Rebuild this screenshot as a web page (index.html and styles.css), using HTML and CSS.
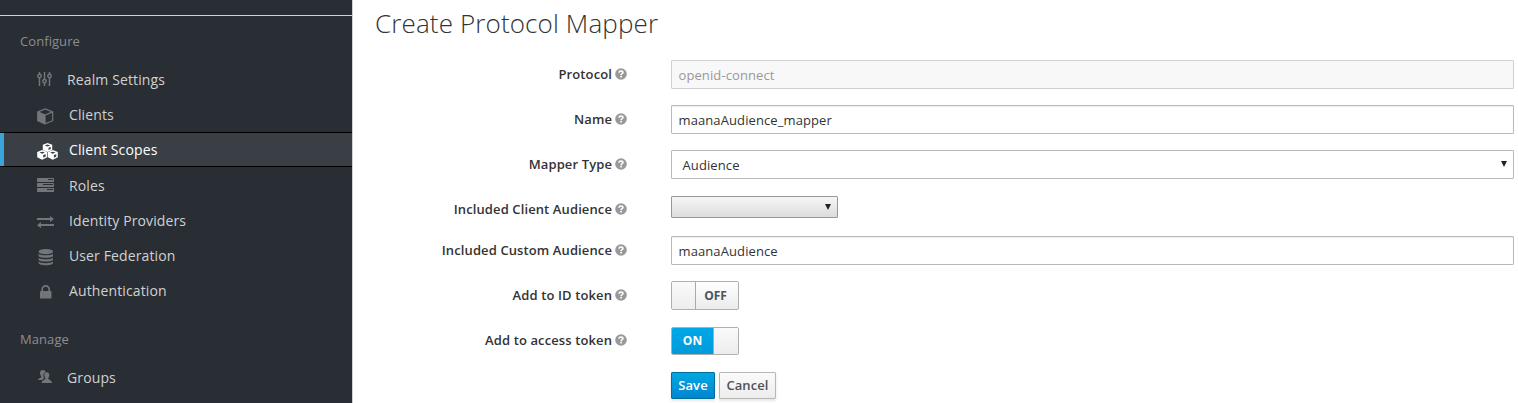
FILE: index.html
```html
<!DOCTYPE html>
<html lang="en">
<head>
<meta charset="utf-8">
<title>Create Protocol Mapper</title>
<link rel="stylesheet" href="styles.css">
</head>
<body>
<svg class="defs" width="0" height="0">
  <symbol id="help" viewBox="0 0 12 12">
    <circle cx="6" cy="6" r="5.8" fill="#999"/>
    <path d="M4 4.7C4.100 3.400 5 3 6 3c1.200 0 1.900.6 1.900 1.500C7.900 5.700 6.100 5.700 6.100 7" fill="none" stroke="#fff" stroke-width="1.600"/>
    <rect x="5.200" y="7.800" width="1.800" height="1.600" fill="#fff"/>
  </symbol>
</svg>
<div class="page">
  <nav class="sidebar">
    <div class="realm"></div>
    <h2 class="group-title">Configure</h2>
    <ul class="menu">
      <li class="item narrow"><svg class="icon" viewBox="0 0 21 17"><g fill="none" stroke="currentColor" stroke-width="1.5"><path d="M2.500 1v2M2.500 7v8M7.500 1v7.500M7.500 12v3M12.500 1v2M12.500 7v8"/><circle cx="2.500" cy="5" r="1.700"/><circle cx="7.500" cy="10.300" r="1.700"/><circle cx="12.500" cy="5" r="1.700"/></g></svg><span>Realm Settings</span></li>
      <li class="item"><svg class="icon" viewBox="0 0 21 17"><path d="M.5 4 8 7v9.200L.5 13z" fill="currentColor"/><path d="M.8 3.900 8.200 1l7.500 2.900v8.800L8 15.900.8 12.700zL8 7l7.700-3.100M8 7v9" fill="none" stroke="currentColor" stroke-width="1.200"/></svg><span>Clients</span></li>
      <li class="item active"><svg class="icon" viewBox="0 0 21 17"><g fill="currentColor"><path d="M10.500 0 15.200 1.800V7l-4.700 2L5.800 7V1.800z"/><path d="M5.200 7 10.200 9v5.200l-5 2.600-5-2.600V9z"/><path d="M15.800 7l5 2v5.200l-5 2.600-5-2.600V9z"/></g><g fill="#393f45"><path d="m7.800 2.400 2.700-.9 2.700.9-2.700 1zM11.500 4.800l2.300-.9v2.200l-2.300 1zM2.500 9.600 5.200 8.700l2.700.9-2.700 1.100zM6.300 12.100l2.400-.9v2.300l-2.400 1.300zM13.100 9.600l2.700-.9 2.700.9-2.700 1.100zM16.900 12.100l2.400-.9v2.300l-2.400 1.300z"/></g></svg><span>Client Scopes</span></li>
      <li class="item roles"><svg class="icon" viewBox="0 0 21 17"><g fill="currentColor"><rect y="1" width="17" height="4" rx=".6"/><rect y="6" width="17" height="4" rx=".6"/><rect y="11" width="17" height="4" rx=".6"/></g><path d="M11 2.500h5M6 7.500h10M10 12.500h6" stroke="#292e34" stroke-width="1"/></svg><span>Roles</span></li>
      <li class="item"><svg class="icon" viewBox="0 0 21 17"><path d="M0 4h13V2l4 3-4 3V6H0zM17 10H4V8l-4 3.200 4 3V12h13z" fill="currentColor"/></svg><span>Identity Providers</span></li>
      <li class="item"><svg class="icon" viewBox="0 0 21 17"><g fill="currentColor"><ellipse cx="8.800" cy="2.700" rx="7.200" ry="2.600"/><path d="M1.600 4.700c2 2.200 12.400 2.200 14.400 0v2c0 2.800-14.400 2.800-14.400 0zM1.600 8.700c2 2.200 12.400 2.200 14.400 0v1.800c0 2.800-14.400 2.800-14.400 0zM1.600 12.500c2 2.200 12.400 2.200 14.400 0v1.600c0 3-14.400 3-14.400 0z"/></g></svg><span>User Federation</span></li>
      <li class="item"><svg class="icon" viewBox="0 0 21 17"><rect x="3" y="7" width="11.500" height="7.500" rx=".8" fill="currentColor"/><path d="M5.200 8V5.400a3.500 3.500 0 0 1 7 0V8" fill="none" stroke="currentColor" stroke-width="1.700"/></svg><span>Authentication</span></li>
    </ul>
    <h2 class="group-title manage">Manage</h2>
    <ul class="menu">
      <li class="item narrow"><svg class="icon" viewBox="0 0 21 17"><g fill="currentColor"><path d="M5.800 1c2 0 2.900 1.500 2.500 2.200C6.200 4 5.800 7 7 9.500L5 11H1c0-2 3-1.700 3.300-2.800C4.500 7.500 3 6 3 4s1-3 2.800-3z"/><path d="M9.700 3.200c2 0 2.900 1.400 2.500 3.600-.2 1.400-1 1.800-.8 2.900.2 1.300 3.500 1.200 3.600 4.300H4.700c0-3.100 3.400-3 3.600-4.300.2-1.100-.8-1.500-1-2.900C7 4.600 7.700 3.200 9.700 3.200z"/></g></svg><span>Groups</span></li>
    </ul>
  </nav>
  <main class="content">
    <h1 class="title">Create Protocol Mapper</h1>
    <form class="form">
      <div class="row"><label class="label">Protocol<svg class="help"><use href="#help"/></svg></label><div class="field disabled">openid-connect</div></div>
      <div class="row"><label class="label">Name<svg class="help"><use href="#help"/></svg></label><div class="field">maanaAudience_mapper</div></div>
      <div class="row"><label class="label">Mapper Type<svg class="help"><use href="#help"/></svg></label><div class="field select">Audience<i class="arrow"></i></div></div>
      <div class="row short"><label class="label">Included Client Audience<svg class="help"><use href="#help"/></svg></label><div class="small-select"><i class="arrow"></i></div></div>
      <div class="row"><label class="label">Included Custom Audience<svg class="help"><use href="#help"/></svg></label><div class="field">maanaAudience</div></div>
      <div class="row"><label class="label">Add to ID token<svg class="help"><use href="#help"/></svg></label><div class="switch"><span class="knob"></span><span class="state">OFF</span></div></div>
      <div class="row"><label class="label">Add to access token<svg class="help"><use href="#help"/></svg></label><div class="switch on"><span class="state">ON</span><span class="knob"></span></div></div>
      <div class="actions"><button type="button" class="btn primary">Save</button><button type="button" class="btn">Cancel</button></div>
    </form>
  </main>
</div>
</body>
</html>
```
FILE: styles.css
```css
* { box-sizing: border-box; }
body { margin: 0; background: #fff; font-family: "Open Sans", sans-serif; font-size: 13px; color: #333; overflow: hidden; }
.defs { display: block; height: 0; }
.page { display: flex; height: 403px; overflow: hidden; }

.sidebar { width: 353px; flex: none; background: #292e34; border-right: 1px solid #d1d1d1; }
.realm { height: 16px; border-bottom: 1px solid #d1d1d1; }
.group-title { margin: 15px 0 0 20px; font-size: 13px; line-height: 20px; font-weight: 400; letter-spacing: .07px; color: #8b8d8f; }
.group-title.manage { margin-top: 21px; }
.menu { list-style: none; margin: 11px 0 0; padding: 0; }
.item { display: flex; height: 35px; align-items: center; padding-left: 37px; font-size: 14px; line-height: 20px; letter-spacing: .12px; color: #d1d1d1; }
.icon { width: 21px; height: 17px; margin: 3px 11px 0 0; color: #72767b; flex: none; }
.narrow .icon { margin: 0 9px 0 0; }
.active { position: relative; background: #393f45; border-top: 1px solid #000; border-bottom: 1px solid #000; color: #fff; }
.active::before { content: ""; position: absolute; left: 0; top: 0; bottom: 0; width: 4px; background: #39a5dc; }
.active .icon { color: #fff; }
.roles { height: 36px; padding-top: 1px; }
.roles .icon { margin-top: 0; }

.content { flex: 1; padding: 7px 4px 0 22px; }
.title { margin: 0; font-size: 26px; font-weight: 300; line-height: 32px; letter-spacing: .13px; }
.form { padding-top: 21px; }
.row { display: flex; height: 45px; }
.row.short { height: 41px; }
.label { width: 252px; height: 27px; display: flex; align-items: center; justify-content: flex-end; margin-right: 44px; font-weight: 600; letter-spacing: .11px; }
.help { width: 12px; height: 12px; margin-left: 3px; }
.field { flex: 1; height: 29px; border: 1px solid #bababa; border-radius: 1px; padding: 2px 7px 0 6.5px; line-height: 25px; letter-spacing: .1px; box-shadow: inset 0 1px 1px rgba(0,0,0,.075); }
.disabled { color: #999; background: #f8f8f8; border-color: #d1d1d1; box-shadow: none; }
.select { display: flex; justify-content: space-between; padding: 2px 6px 0 10.5px; box-shadow: none; }
.arrow { width: 0; height: 0; border: 3px solid transparent; border-top: 6px solid #222; border-bottom: 0; }
.select .arrow { margin-top: 8px; }
.small-select { width: 167px; height: 22px; margin-top: 1px; display: flex; justify-content: flex-end; padding: 7px 6px 0; border: 1px solid #999; border-radius: 1px; background: linear-gradient(#f6f6f6, #dcdcdc); }

.switch { display: flex; width: 68px; height: 29px; border: 1px solid #b0b0b0; border-radius: 2px; background: linear-gradient(#fff, #ebebeb); font-size: 12px; font-weight: 700; line-height: 28px; overflow: hidden; }
.knob { width: 24px; border-right: 1px solid #aaa; background: linear-gradient(#fafafa, #ededed); }
.state { flex: 1; text-align: center; color: #4d5258; padding-right: 3px; }
.switch.on { height: 28px; margin-top: 1px; line-height: 26px; }
.on .state { color: #fff; background: linear-gradient(#00a8e8, #009bdb); padding: 0; }
.on .knob { width: 25px; border-right: 0; border-left: 1px solid #aaa; }

.actions { display: flex; gap: 4px; margin: 1px 0 0 296px; }
.btn { width: 57px; height: 27px; padding: 0; border: 1px solid #b7b7b7; border-radius: 1px; background: linear-gradient(#fafafa, #ededed); color: #4d5258; font: 600 13px/25px "Open Sans", sans-serif; letter-spacing: .1px; box-shadow: 0 2px 3px rgba(3,3,3,.1); }
.primary { width: 44px; border-color: #006e9c; background: linear-gradient(#00a8e1, #0085cf); color: #fff; }
```
